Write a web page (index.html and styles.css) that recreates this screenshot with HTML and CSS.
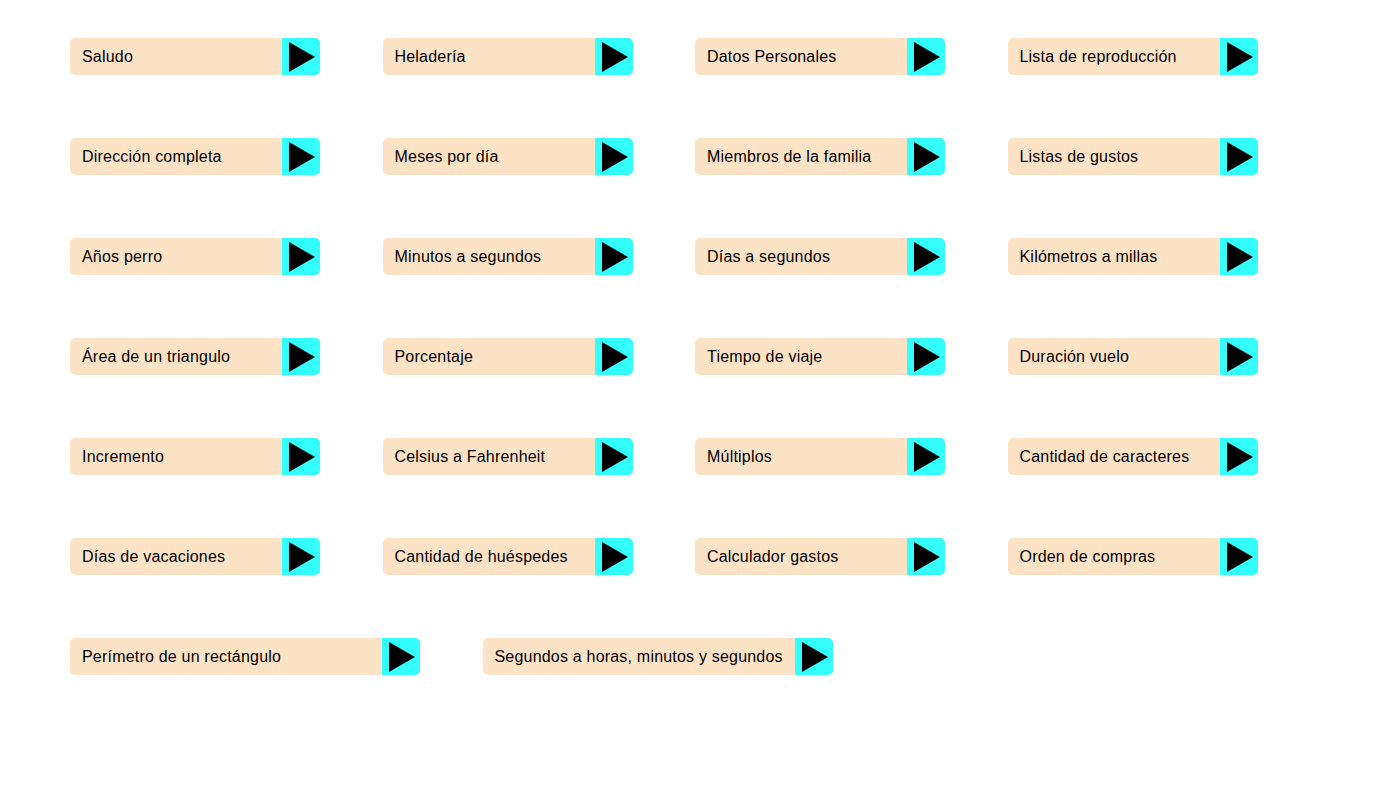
FILE: index.html
```html
<!DOCTYPE html>
<html lang="es">
<head>
<meta charset="utf-8">
<title>Ejercicios</title>
<link rel="stylesheet" href="styles.css">
</head>
<body>
<main class="grid">
  <a class="btn"><span class="label">Saludo</span><span class="play"><svg viewBox="0 0 38 37"><polygon points="7,4 33,19 7,34"/></svg></span></a>
  <a class="btn"><span class="label">Heladería</span><span class="play"><svg viewBox="0 0 38 37"><polygon points="7,4 33,19 7,34"/></svg></span></a>
  <a class="btn"><span class="label">Datos Personales</span><span class="play"><svg viewBox="0 0 38 37"><polygon points="7,4 33,19 7,34"/></svg></span></a>
  <a class="btn"><span class="label">Lista de reproducción</span><span class="play"><svg viewBox="0 0 38 37"><polygon points="7,4 33,19 7,34"/></svg></span></a>

  <a class="btn"><span class="label">Dirección completa</span><span class="play"><svg viewBox="0 0 38 37"><polygon points="7,4 33,19 7,34"/></svg></span></a>
  <a class="btn"><span class="label">Meses por día</span><span class="play"><svg viewBox="0 0 38 37"><polygon points="7,4 33,19 7,34"/></svg></span></a>
  <a class="btn"><span class="label">Miembros de la familia</span><span class="play"><svg viewBox="0 0 38 37"><polygon points="7,4 33,19 7,34"/></svg></span></a>
  <a class="btn"><span class="label">Listas de gustos</span><span class="play"><svg viewBox="0 0 38 37"><polygon points="7,4 33,19 7,34"/></svg></span></a>

  <a class="btn"><span class="label">Años perro</span><span class="play"><svg viewBox="0 0 38 37"><polygon points="7,4 33,19 7,34"/></svg></span></a>
  <a class="btn"><span class="label">Minutos a segundos</span><span class="play"><svg viewBox="0 0 38 37"><polygon points="7,4 33,19 7,34"/></svg></span></a>
  <a class="btn"><span class="label">Días a segundos</span><span class="play"><svg viewBox="0 0 38 37"><polygon points="7,4 33,19 7,34"/></svg></span></a>
  <a class="btn"><span class="label">Kilómetros a millas</span><span class="play"><svg viewBox="0 0 38 37"><polygon points="7,4 33,19 7,34"/></svg></span></a>

  <a class="btn"><span class="label">Área de un triangulo</span><span class="play"><svg viewBox="0 0 38 37"><polygon points="7,4 33,19 7,34"/></svg></span></a>
  <a class="btn"><span class="label">Porcentaje</span><span class="play"><svg viewBox="0 0 38 37"><polygon points="7,4 33,19 7,34"/></svg></span></a>
  <a class="btn"><span class="label">Tiempo de viaje</span><span class="play"><svg viewBox="0 0 38 37"><polygon points="7,4 33,19 7,34"/></svg></span></a>
  <a class="btn"><span class="label">Duración vuelo</span><span class="play"><svg viewBox="0 0 38 37"><polygon points="7,4 33,19 7,34"/></svg></span></a>

  <a class="btn"><span class="label">Incremento</span><span class="play"><svg viewBox="0 0 38 37"><polygon points="7,4 33,19 7,34"/></svg></span></a>
  <a class="btn"><span class="label">Celsius a Fahrenheit</span><span class="play"><svg viewBox="0 0 38 37"><polygon points="7,4 33,19 7,34"/></svg></span></a>
  <a class="btn"><span class="label">Múltiplos</span><span class="play"><svg viewBox="0 0 38 37"><polygon points="7,4 33,19 7,34"/></svg></span></a>
  <a class="btn"><span class="label">Cantidad de caracteres</span><span class="play"><svg viewBox="0 0 38 37"><polygon points="7,4 33,19 7,34"/></svg></span></a>

  <a class="btn"><span class="label">Días de vacaciones</span><span class="play"><svg viewBox="0 0 38 37"><polygon points="7,4 33,19 7,34"/></svg></span></a>
  <a class="btn"><span class="label">Cantidad de huéspedes</span><span class="play"><svg viewBox="0 0 38 37"><polygon points="7,4 33,19 7,34"/></svg></span></a>
  <a class="btn"><span class="label">Calculador gastos</span><span class="play"><svg viewBox="0 0 38 37"><polygon points="7,4 33,19 7,34"/></svg></span></a>
  <a class="btn"><span class="label">Orden de compras</span><span class="play"><svg viewBox="0 0 38 37"><polygon points="7,4 33,19 7,34"/></svg></span></a>

  <div class="last-row">
    <a class="btn wide"><span class="label">Perímetro de un rectángulo</span><span class="play"><svg viewBox="0 0 38 37"><polygon points="7,4 33,19 7,34"/></svg></span></a>
    <a class="btn wide"><span class="label">Segundos a horas, minutos y segundos</span><span class="play"><svg viewBox="0 0 38 37"><polygon points="7,4 33,19 7,34"/></svg></span></a>
  </div>
</main>
</body>
</html>
```

FILE: styles.css
```css
html, body {
  margin: 0;
  padding: 0;
  background: #ffffff;
}

body {
  font-family: "Liberation Sans", Arial, sans-serif;
  font-size: 16px;
  color: #000;
}

.grid {
  display: grid;
  grid-template-columns: repeat(4, 312.5px);
  row-gap: 63px;
  padding: 38px 0 0 70px;
}

.btn {
  display: flex;
  align-items: stretch;
  width: 250px;
  height: 37px;
  background: #fde3c6;
  border-radius: 5px;
  overflow: hidden;
  cursor: pointer;
}

.label {
  flex: 1;
  display: flex;
  align-items: center;
  padding-left: 12px;
  padding-top: 1px;
  white-space: nowrap;
  letter-spacing: 0.2px;
}

.play {
  flex: none;
  width: 38px;
  height: 37px;
  background: #33ffff;
  display: block;
}

.play svg {
  display: block;
  width: 38px;
  height: 37px;
}

.play polygon {
  fill: #000;
}

.last-row {
  grid-column: 1 / -1;
  display: flex;
  gap: 62.5px;
}

.btn.wide {
  width: 350px;
}
```
